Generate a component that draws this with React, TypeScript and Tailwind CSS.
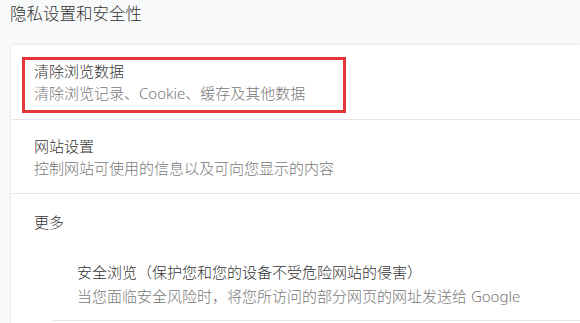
import React from "react";

const font = { fontFamily: '"Noto Sans", "Noto Sans CJK SC", sans-serif' };

export default function App() {
  return (
    <div
      className="w-[580px] h-[323px] overflow-hidden bg-[#f8f9fa] flex flex-col [text-spacing-trim:space-all] font-light"
      style={font}
    >
      <div className="pl-[10px] pt-[4px] h-[45px] text-[16.5px] leading-[20px] text-[#333]">
        隐私设置和安全性
      </div>
      <div className="ml-[11px] flex-1 bg-white shadow-[0_0_2px_rgba(0,0,0,0.18)] rounded-tl-[2px] flex flex-col">
        {/* Row 1 with red annotation box */}
        <div className="pt-[12px] pb-[6px] pl-[11px] border-b border-[#e8e8e8]">
          <div className="w-[324px] h-[56px] border-[3px] border-[#e5373a] pl-[9px]">
            <div className="text-[15px] leading-[22px] text-[#333]">清除浏览数据</div>
            <div className="text-[15px] leading-[22px] text-[#777]">
              清除浏览记录、Cookie、缓存及其他数据
            </div>
          </div>
        </div>
        {/* Row 2 */}
        <div className="pt-[15px] pb-[14px] pl-[23px] border-b border-[#e8e8e8]">
          <div className="text-[15px] leading-[22px] text-[#333]">网站设置</div>
          <div className="text-[15px] leading-[22px] text-[#777]">
            控制网站可使用的信息以及可向您显示的内容
          </div>
        </div>
        {/* Row 3 */}
        <div className="pt-[17px] pl-[23px] h-[51px] text-[15px] leading-[22px] text-[#333]">
          更多
        </div>
        <div className="pl-[42px]">
          <div className="pl-[24px] pt-[15px] pb-[12px] border-b border-[#e8e8e8]">
            <div className="text-[15px] leading-[24px] text-[#333]">
              安全浏览（保护您和您的设备不受危险网站的侵害）
            </div>
            <div className="text-[15px] leading-[24px] text-[#777]">
              当您面临安全风险时，将您所访问的部分网页的网址发送给 Google
            </div>
          </div>
        </div>
      </div>
    </div>
  );
}
